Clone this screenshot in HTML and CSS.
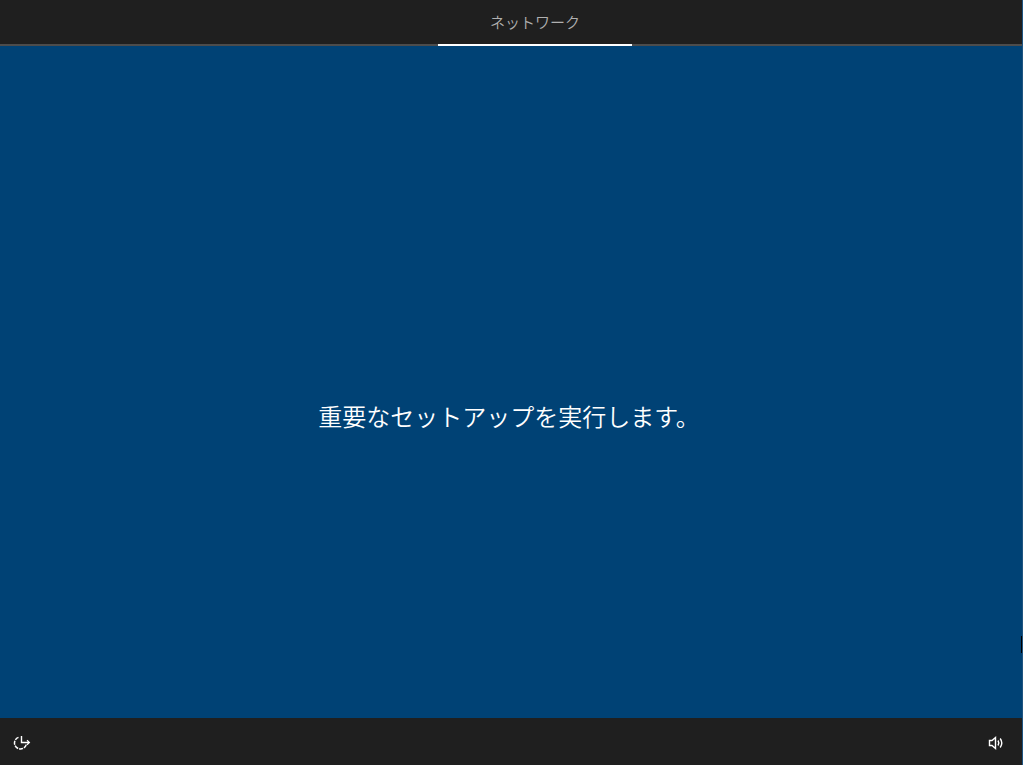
FILE: index.html
```
<!DOCTYPE html>
<html lang="ja">
<head>
    <meta charset="UTF-8">
    <meta name="viewport" content="width=device-width, initial-scale=1.0">
    <title>ネットワーク</title>
    <link rel="stylesheet" href="styles.css">
</head>
<body>
    <div class="setup">
        <nav class="tabs">
            <a class="tab" href="#network" aria-current="step">ネットワーク</a>
        </nav>
        <main class="content" id="network">
            <h1 class="message">重要なセットアップを実行します。</h1>
            <span class="caret"></span>
        </main>
        <footer class="toolbar">
            <button class="tool" type="button" aria-label="簡単操作">
                <svg width="18" height="16" viewBox="0 0 18 16" fill="none" stroke="#fff">
                    <path d="M5.5 2.4A6 6 0 0 0 1.5 8A6 6 0 0 0 7.5 14A6 6 0 0 0 13.3 9.5" stroke-width="1.5" stroke-dasharray="4 1"/>
                    <path d="M8.5 1V7.5H16" stroke-width="1.4"/>
                    <path d="M14 5.3L16.4 7.5L14 9.7" stroke-width="1.2"/>
                </svg>
            </button>
            <button class="tool" type="button" aria-label="音量">
                <svg width="16" height="16" viewBox="0 0 16 16" fill="none" stroke="#fff">
                    <path d="M1.5 5.5H4L7.5 2.5V13.5L4 10.5H1.5Z" stroke-width="1.4"/>
                    <path d="M10 5.5Q11.6 8 10 10.5" stroke-width="1.4"/>
                    <path d="M12.2 3.5Q15.4 8 12.2 12.5" stroke-width="1.4"/>
                </svg>
            </button>
        </footer>
    </div>
</body>
</html>
```
FILE: styles.css
```
* {
    box-sizing: border-box;
}
body {
    margin: 0;
    font-family: "Noto Sans CJK JP", sans-serif;
    font-weight: 350;
    color: #fff;
}
.setup {
    display: flex;
    flex-direction: column;
    min-height: 100vh;
    background-color: #004275;
    border-right: 1px solid #1e5480;
}
.tabs {
    display: grid;
    grid-template-columns: 438fr 194fr 390fr;
    height: 46px;
    background-color: #1f1f1f;
    box-shadow: inset 0 -2px #4c4c4c;
}
.tab {
    grid-column: 2;
    border-bottom: 2px solid #fff;
    color: #b0b0b0;
    font-size: 15px;
    line-height: 44px;
    text-align: center;
    text-decoration: none;
}
.content {
    position: relative;
    flex: 1;
    display: flex;
    justify-content: center;
    align-items: center;
    padding: 68px 4px 0 0;
}
.message {
    margin: 0;
    font-size: 24px;
    font-weight: 350;
    line-height: 36px;
}
.caret {
    position: absolute;
    right: 0;
    bottom: 65px;
    width: 1px;
    height: 17px;
    background-color: #000;
}
.toolbar {
    display: flex;
    justify-content: space-between;
    align-items: center;
    height: 47px;
    padding: 2px 14px 0 9px;
    background-color: #1f1f1f;
}
.tool {
    display: flex;
    padding: 4px;
    border: 0;
    background: none;
    cursor: pointer;
}
```
